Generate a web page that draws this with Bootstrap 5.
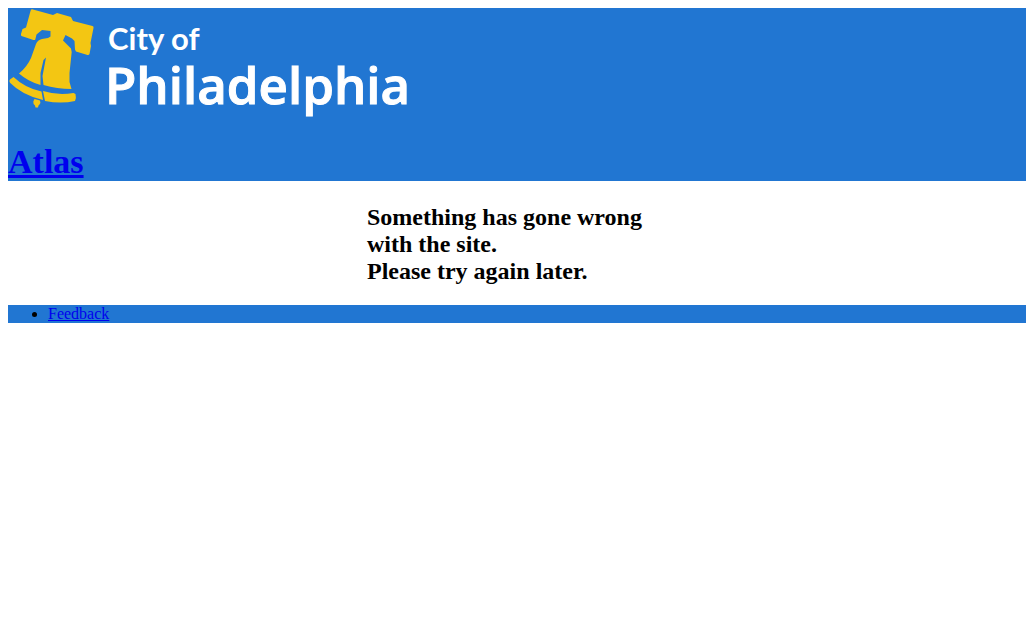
<!DOCTYPE html>
<html lang="en">
<head>
<meta charset="utf-8">
<meta name="viewport" content="width=device-width, initial-scale=1">
<title>Atlas</title>
<link href="https://cdn.jsdelivr.net/npm/bootstrap@5.3.0/dist/css/bootstrap.min.css" rel="stylesheet">
<style>
body { font: 16px/18px "Liberation Serif", serif; color: #000; background: #fff; }
a, a:hover { color: #00e; }
.site-bar { background: #2176d2; }
.site-logo { display: block; width: 404px; max-width: 100%; }
.site-logo text { font-family: Lato, sans-serif; fill: #fff; font-weight: 700; }
.site-logo .city-name { font-family: "Open Sans", sans-serif; font-weight: 600; stroke: #fff; stroke-width: 1px; }
.site-title { font-size: 34px; line-height: 38px; font-weight: 700; margin-top: 22px; }
.notice { max-width: 300px; padding: 23px 0 20px; }
.notice h2 { font-size: 24px; line-height: 27px; font-weight: 700; }
.footer-links { padding-left: 40px; }
</style>
</head>
<body class="p-2">
<header class="site-bar">
  <a href="#" aria-label="City of Philadelphia" class="d-inline-block align-top">
    <svg class="site-logo" viewBox="8 8 404 113" role="img" aria-hidden="true">
      <g fill="#f3c613">
        <path d="M32 9.300L53 15L57 13L71 17L73 21L92.500 26Q94 26.500 93.500 28L90.500 43L91 46L89.500 54Q89 55.300 87.500 55L76 51.500L75 49.500L74.500 41L72 38.500L65.500 35L63 40.500L71 48.500L71.700 52L69.500 73L69.500 82L71.500 89Q57 89 43.500 85L42.500 76L46 57.500L43.500 60L40.500 73L40.500 85Q28 81.500 19 73.500Q27 67 31 58L36 44Q37.500 40 42 39L48 38L50.500 36.500L50.500 31L42 30L36.500 34.500L35.300 39.500Q34.500 40.500 32 39.500L21.500 36Q20.700 35.500 21 34L22.500 29L26 27.500L30.500 11Q31 9 32 9.300Z"/>
        <path d="M13.500 77L10 79.500Q8.700 81 10 82.700Q22 95 43 100L41.500 91.500Q25 88 13.500 77Z"/>
        <path d="M43 91L45 101Q61 104 75 101Q76.500 98 75.500 94L73.500 93Q57 95.500 43 91Z"/>
        <path d="M34.500 99L40 100.500Q41 103 39.500 104.500L38.500 105.500L38 107.500H35.500L35 105.500Q33 104 33.300 101.500Z"/>
      </g>
      <text x="108" y="50" font-size="31">City of</text>
      <text class="city-name" x="105" y="104" font-size="51">Philadelphia</text>
    </svg>
  </a>
  <h1 class="site-title mb-0"><a href="#">Atlas</a></h1>
</header>
<main class="notice mx-auto">
  <h2 class="m-0">Something has gone wrong with the site.<br>Please try again later.</h2>
</main>
<footer class="site-bar">
  <ul class="footer-links m-0">
    <li><a href="#">Feedback</a></li>
  </ul>
</footer>
<script src="https://cdn.jsdelivr.net/npm/bootstrap@5.3.0/dist/js/bootstrap.bundle.min.js"></script>
</body>
</html>
